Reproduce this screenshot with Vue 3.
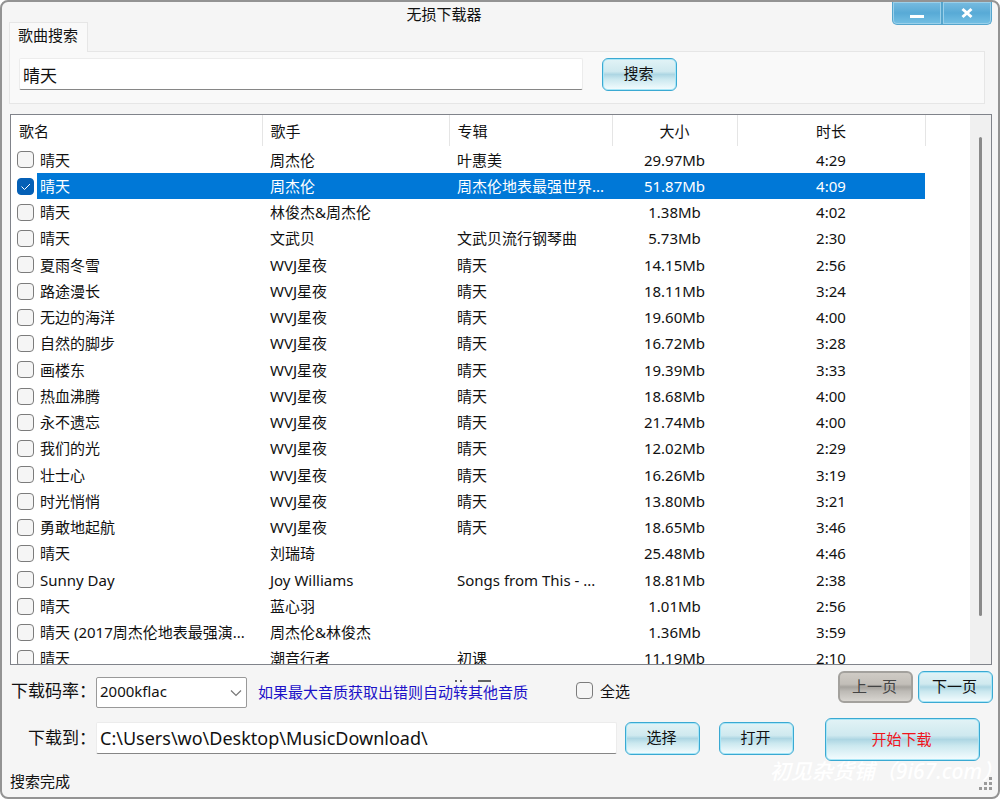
<script setup>
import { ref } from 'vue'

const keyword = ref('晴天')
const bitrate = ref('2000kflac')
const folder = ref('C:\\Users\\wo\\Desktop\\MusicDownload\\')
const selectAll = ref(false)

const rows = [
  ['晴天', '周杰伦', '叶惠美', '29.97Mb', '4:29'],
  ['晴天', '周杰伦', '周杰伦地表最强世界...', '51.87Mb', '4:09'],
  ['晴天', '林俊杰&周杰伦', '', '1.38Mb', '4:02'],
  ['晴天', '文武贝', '文武贝流行钢琴曲', '5.73Mb', '2:30'],
  ['夏雨冬雪', 'WVJ星夜', '晴天', '14.15Mb', '2:56'],
  ['路途漫长', 'WVJ星夜', '晴天', '18.11Mb', '3:24'],
  ['无边的海洋', 'WVJ星夜', '晴天', '19.60Mb', '4:00'],
  ['自然的脚步', 'WVJ星夜', '晴天', '16.72Mb', '3:28'],
  ['画楼东', 'WVJ星夜', '晴天', '19.39Mb', '3:33'],
  ['热血沸腾', 'WVJ星夜', '晴天', '18.68Mb', '4:00'],
  ['永不遗忘', 'WVJ星夜', '晴天', '21.74Mb', '4:00'],
  ['我们的光', 'WVJ星夜', '晴天', '12.02Mb', '2:29'],
  ['壮士心', 'WVJ星夜', '晴天', '16.26Mb', '3:19'],
  ['时光悄悄', 'WVJ星夜', '晴天', '13.80Mb', '3:21'],
  ['勇敢地起航', 'WVJ星夜', '晴天', '18.65Mb', '3:46'],
  ['晴天', '刘瑞琦', '', '25.48Mb', '4:46'],
  ['Sunny Day', 'Joy Williams', 'Songs from This - ...', '18.81Mb', '2:38'],
  ['晴天', '蓝心羽', '', '1.01Mb', '2:56'],
  ['晴天 (2017周杰伦地表最强演...', '周杰伦&林俊杰', '', '1.36Mb', '3:59'],
  ['晴天', '潮音行者', '初课', '11.19Mb', '2:10'],
]
const songs = ref(
  rows.map(([name, artist, album, size, time], i) => ({ name, artist, album, size, time, checked: i === 1 }))
)
</script>

<template>
  <div class="window" lang="zh-CN">
    <header class="titlebar">
      <h1>无损下载器</h1>
      <div class="caption">
        <button type="button" aria-label="最小化">
          <svg width="16" height="16" viewBox="0 0 16 16"><path d="M1 11.5h14" stroke="#fff" stroke-width="3" /></svg>
        </button>
        <button type="button" aria-label="关闭">
          <svg width="16" height="16" viewBox="0 0 16 16"><path d="M3.5 4l9 8M12.5 4l-9 8" stroke="#fff" stroke-width="3" /></svg>
        </button>
      </div>
    </header>

    <nav class="tabs"><button type="button" class="tab">歌曲搜索</button></nav>
    <section class="panel">
      <input v-model="keyword" class="field search" type="text" aria-label="歌曲搜索" />
      <button type="button" class="btn">搜索</button>
    </section>

    <section class="list">
      <div class="viewport">
        <table>
          <colgroup>
            <col class="c-name" /><col class="c-artist" /><col class="c-album" /><col class="c-size" /><col class="c-time" /><col />
          </colgroup>
          <thead>
            <tr>
              <th>歌名</th><th>歌手</th><th>专辑</th><th class="mid">大小</th><th class="mid">时长</th><td></td>
            </tr>
          </thead>
          <tbody>
            <tr v-for="(s, i) in songs" :key="i" :class="{ selected: s.checked }">
              <td class="name">
                <label><input v-model="s.checked" class="check" type="checkbox" /><span>{{ s.name }}</span></label>
              </td>
              <td>{{ s.artist }}</td>
              <td>{{ s.album }}</td>
              <td class="mid">{{ s.size }}</td>
              <td class="mid">{{ s.time }}</td>
              <td class="rest"></td>
            </tr>
          </tbody>
        </table>
      </div>
      <div class="track"><div class="thumb"></div></div>
    </section>

    <footer>
      <div class="row options">
        <label class="lead" for="bitrate">下载码率：</label>
        <div class="selectbox">
          <select id="bitrate" v-model="bitrate"><option>2000kflac</option></select>
          <svg class="chevron" width="12" height="8" viewBox="0 0 12 8"><path d="M1 1.5l5 5 5-5" fill="none" stroke="#777" stroke-width="1.2" /></svg>
        </div>
        <p class="hint">
          如果最大音质获取出错则自动转其他音质
          <svg class="remnant" width="38" height="2" viewBox="0 0 38 2"><path d="M1 1h2M6 1h2M24 1h13" stroke="#333" stroke-width="1.5" /></svg>
        </p>
        <label class="all"><input v-model="selectAll" class="check" type="checkbox" />全选</label>
        <div class="pager">
          <button type="button" class="btn off" disabled>上一页</button>
          <button type="button" class="btn">下一页</button>
        </div>
      </div>
      <div class="row target">
        <label class="lead" for="folder">下载到：</label>
        <input id="folder" v-model="folder" class="field path" type="text" />
        <button type="button" class="btn pick">选择</button>
        <button type="button" class="btn open">打开</button>
        <button type="button" class="btn start">开始下载</button>
      </div>
      <div class="status">搜索完成</div>
    </footer>

    <div class="watermark">初见杂货铺（9i67.com）</div>
    <svg class="grip" width="14" height="14" viewBox="0 0 14 14" fill="#9a9a9a">
      <path d="M11 0h3v3h-3zM6 5h3v3h-3zM11 5h3v3h-3zM1 10h3v3h-3zM6 10h3v3h-3zM11 10h3v3h-3z" />
    </svg>
  </div>
</template>

<style>
body {
  background: #fff;
}
</style>

<style scoped>
* {
  box-sizing: border-box;
}
.window {
  position: relative;
  display: flex;
  flex-direction: column;
  height: 100vh;
  overflow: hidden;
  border: 2px solid #939393;
  border-radius: 8px;
  background: #f5f5f5;
  color: #111;
  font: 15px/24px "Noto Sans", "Noto Sans CJK SC", sans-serif;
}
button,
input,
select {
  font: inherit;
  color: inherit;
}
.titlebar {
  display: flex;
  align-items: flex-start;
  height: 20px;
  padding-right: 6px;
}
h1 {
  flex: 1;
  margin: 0;
  padding-right: 6px;
  font-size: 15px;
  font-weight: 400;
  text-align: center;
}
.caption {
  display: flex;
}
.caption button {
  display: grid;
  place-items: center;
  width: 50px;
  height: 23px;
  padding: 0;
  border: 1px solid #55a5cd;
  border-top: 0;
  background: linear-gradient(#78bce0, #58aad6 50%, #74c0e4);
  box-shadow: inset 0 0 0 1px #9ad0ea;
}
.caption button:first-child {
  border-bottom-left-radius: 5px;
}
.caption button:last-child {
  border-bottom-right-radius: 5px;
}
.tabs {
  position: relative;
  z-index: 1;
  display: flex;
  padding-left: 7px;
}
.tab {
  height: 30px;
  padding: 0 9px 5px 8px;
  border: 1px solid #e6e6e6;
  border-bottom: 0;
  background: #f9f9f9;
}
.panel {
  display: flex;
  align-items: flex-start;
  gap: 19px;
  height: 53px;
  margin: -1px 13px 0 7px;
  padding: 6px 9px;
  border: 1px solid #e6e6e6;
  background: #f9f9f9;
}
.field {
  min-width: 0;
  height: 32px;
  padding: 0 3px;
  border: 1px solid #ececec;
  border-bottom-color: #868686;
  border-radius: 2px;
  outline: 0;
  background: #fff;
  font-size: 17px;
}
.search {
  flex: 0 1 564px;
}
.path {
  font-size: 18px;
}
.btn {
  flex: none;
  width: 75px;
  height: 33px;
  padding: 0 2px 3px 0;
  border: 1px solid #3aa9d2;
  border-radius: 6px;
  background: linear-gradient(#e2f3f6, #cfe9ef 40%, #add6e3 50%, #cbe8ef 65%, #f5fdff);
  box-shadow: inset 0 0 0 1px #a9e6f7;
}
.btn.off {
  border: 2px solid #a3a19d;
  background: linear-gradient(#cfcbc5, #c2beb8 40%, #a5a29d 50%, #bdbab5 65%, #d8d5d0);
  box-shadow: none;
  color: #444;
}
.list {
  display: flex;
  flex: 1;
  min-height: 0;
  margin: 10px 6px 0 8px;
  border: 1px solid #80838a;
  background: #fff;
}
.viewport {
  flex: 1;
  min-width: 0;
  overflow: hidden;
}
table {
  width: 100%;
  table-layout: fixed;
  border-collapse: collapse;
  white-space: nowrap;
}
.c-name {
  width: 251px;
}
.c-artist {
  width: 187px;
}
.c-album {
  width: 163px;
}
.c-size {
  width: 125px;
}
.c-time {
  width: 188px;
}
th {
  height: 31px;
  padding: 0 8px;
  border-right: 1px solid #e5e5e5;
  font-weight: 400;
  text-align: left;
}
td {
  height: 26px;
  padding: 0 0 0 8px;
  overflow: hidden;
}
tbody tr:nth-child(4n + 1) td {
  height: 27px;
}
th.mid,
td.mid {
  padding: 0;
  text-align: center;
}
.name {
  padding: 0 0 0 6px;
}
.name label {
  display: flex;
  align-items: center;
  gap: 6px;
}
.selected td {
  background: #0078d7;
  color: #fff;
}
.selected .name {
  background: linear-gradient(90deg, #fff 26px, #0078d7 26px);
}
.selected .rest {
  background: none;
}
.check {
  flex: none;
  appearance: none;
  width: 17px;
  height: 17px;
  margin: 0;
  border: 1px solid #7c7c7c;
  border-radius: 4px;
  background: #f5f5f5;
}
.check:checked {
  border-color: #0560b6;
  background: #0560b6 url("data:image/svg+xml,%3Csvg xmlns='http://www.w3.org/2000/svg' viewBox='0 0 15 15'%3E%3Cpath d='M3.5 7.5l3 3 5.5-5.5' fill='none' stroke='%23fff'/%3E%3C/svg%3E");
}
.track {
  width: 21px;
  padding: 22px 9px 48px;
  background: #f0f0f0;
}
.thumb {
  height: 100%;
  border-radius: 2px;
  background: #8a8a8a;
}
.row {
  display: flex;
  padding-left: 8px;
}
.lead {
  flex: none;
  width: 86px;
  font-size: 17px;
  text-align: right;
}
.options {
  align-items: flex-end;
  height: 37px;
  margin-top: 6px;
  padding-right: 5px;
}
.options .lead {
  line-height: 34px;
}
.selectbox {
  position: relative;
  width: 151px;
}
.selectbox select {
  display: block;
  appearance: none;
  width: 100%;
  height: 31px;
  padding: 0 3px 4px;
  border: 1px solid #999;
  border-radius: 2px;
  background: #fff;
}
.chevron {
  position: absolute;
  top: 12px;
  right: 5px;
  pointer-events: none;
}
.hint {
  position: relative;
  margin: 0 0 0 11px;
  color: #1c12c8;
  line-height: 32px;
}
.remnant {
  position: absolute;
  top: 4px;
  left: 196px;
}
.all {
  display: flex;
  align-items: center;
  gap: 7px;
  height: 35px;
  margin-left: 48px;
}
.pager {
  display: flex;
  align-self: flex-start;
  gap: 5px;
  margin-left: auto;
}
.options .btn {
  height: 32px;
}
.target {
  align-items: flex-start;
  height: 43px;
  margin-top: 10px;
  padding-right: 18px;
}
.target .lead {
  line-height: 40px;
}
.target .field {
  flex: 0 1 521px;
  margin-top: 4px;
}
.pick,
.open {
  margin-top: 4px;
}
.pick {
  margin-left: 8px;
}
.open {
  margin-left: 19px;
}
.start {
  width: 155px;
  height: 43px;
  margin-left: auto;
  padding-bottom: 1px;
  color: #f0141c;
}
.status {
  margin-top: 4px;
  padding-left: 8px;
  line-height: 32px;
}
.watermark {
  position: absolute;
  right: -5px;
  bottom: 12px;
  color: #fff;
  font-size: 21px;
  font-style: italic;
  font-weight: 500;
  line-height: 28px;
  white-space: nowrap;
  pointer-events: none;
}
.grip {
  position: absolute;
  right: 6px;
  bottom: 6px;
}
</style>
